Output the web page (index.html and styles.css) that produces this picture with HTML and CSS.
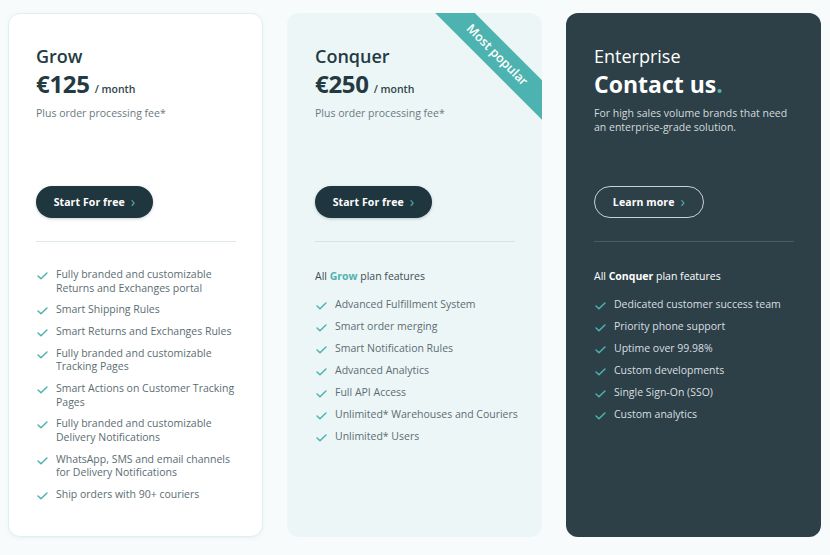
FILE: index.html
```html
<!DOCTYPE html>
<html>
<head>
<meta charset="utf-8">
<link rel="stylesheet" href="styles.css">
</head>
<body>
<div class="plans">
  <div class="card card-grow">
    <div class="top">
      <div class="name">Grow</div>
      <div class="price"><span class="amount">€125</span><span class="per">/ month</span></div>
      <p class="desc">Plus order processing fee*</p>
    </div>
    <a class="btn btn-dark">Start For free <span class="chev">›</span></a>
    <hr class="divider">
    <ul class="features first">
      <li><svg class="check" viewBox="0 0 12 9"><path d="M1 4.5 L4.3 7.6 L11 1.2"/></svg><span>Fully branded and customizable Returns and Exchanges portal</span></li>
      <li><svg class="check" viewBox="0 0 12 9"><path d="M1 4.5 L4.3 7.6 L11 1.2"/></svg><span>Smart Shipping Rules</span></li>
      <li><svg class="check" viewBox="0 0 12 9"><path d="M1 4.5 L4.3 7.6 L11 1.2"/></svg><span>Smart Returns and Exchanges Rules</span></li>
      <li><svg class="check" viewBox="0 0 12 9"><path d="M1 4.5 L4.3 7.6 L11 1.2"/></svg><span>Fully branded and customizable Tracking Pages</span></li>
      <li><svg class="check" viewBox="0 0 12 9"><path d="M1 4.5 L4.3 7.6 L11 1.2"/></svg><span>Smart Actions on Customer Tracking Pages</span></li>
      <li><svg class="check" viewBox="0 0 12 9"><path d="M1 4.5 L4.3 7.6 L11 1.2"/></svg><span>Fully branded and customizable Delivery Notifications</span></li>
      <li><svg class="check" viewBox="0 0 12 9"><path d="M1 4.5 L4.3 7.6 L11 1.2"/></svg><span>WhatsApp, SMS and email channels for Delivery Notifications</span></li>
      <li><svg class="check" viewBox="0 0 12 9"><path d="M1 4.5 L4.3 7.6 L11 1.2"/></svg><span>Ship orders with 90+ couriers</span></li>
    </ul>
  </div>

  <div class="card card-conquer">
    <div class="ribbon">Most popular</div>
    <div class="top">
      <div class="name">Conquer</div>
      <div class="price"><span class="amount">€250</span><span class="per">/ month</span></div>
      <p class="desc">Plus order processing fee*</p>
    </div>
    <a class="btn btn-dark">Start For free <span class="chev">›</span></a>
    <hr class="divider">
    <p class="all">All <b class="accent">Grow</b> plan features</p>
    <ul class="features">
      <li><svg class="check" viewBox="0 0 12 9"><path d="M1 4.5 L4.3 7.6 L11 1.2"/></svg><span>Advanced Fulfillment System</span></li>
      <li><svg class="check" viewBox="0 0 12 9"><path d="M1 4.5 L4.3 7.6 L11 1.2"/></svg><span>Smart order merging</span></li>
      <li><svg class="check" viewBox="0 0 12 9"><path d="M1 4.5 L4.3 7.6 L11 1.2"/></svg><span>Smart Notification Rules</span></li>
      <li><svg class="check" viewBox="0 0 12 9"><path d="M1 4.5 L4.3 7.6 L11 1.2"/></svg><span>Advanced Analytics</span></li>
      <li><svg class="check" viewBox="0 0 12 9"><path d="M1 4.5 L4.3 7.6 L11 1.2"/></svg><span>Full API Access</span></li>
      <li><svg class="check" viewBox="0 0 12 9"><path d="M1 4.5 L4.3 7.6 L11 1.2"/></svg><span>Unlimited* Warehouses and Couriers</span></li>
      <li><svg class="check" viewBox="0 0 12 9"><path d="M1 4.5 L4.3 7.6 L11 1.2"/></svg><span>Unlimited* Users</span></li>
    </ul>
  </div>

  <div class="card card-enterprise">
    <div class="top">
      <div class="name light">Enterprise</div>
      <div class="contact">Contact us<span class="dot">.</span></div>
      <p class="desc">For high sales volume brands that need an enterprise-grade solution.</p>
    </div>
    <a class="btn btn-outline">Learn more <span class="chev">›</span></a>
    <hr class="divider">
    <p class="all">All <b>Conquer</b> plan features</p>
    <ul class="features">
      <li><svg class="check" viewBox="0 0 12 9"><path d="M1 4.5 L4.3 7.6 L11 1.2"/></svg><span>Dedicated customer success team</span></li>
      <li><svg class="check" viewBox="0 0 12 9"><path d="M1 4.5 L4.3 7.6 L11 1.2"/></svg><span>Priority phone support</span></li>
      <li><svg class="check" viewBox="0 0 12 9"><path d="M1 4.5 L4.3 7.6 L11 1.2"/></svg><span>Uptime over 99.98%</span></li>
      <li><svg class="check" viewBox="0 0 12 9"><path d="M1 4.5 L4.3 7.6 L11 1.2"/></svg><span>Custom developments</span></li>
      <li><svg class="check" viewBox="0 0 12 9"><path d="M1 4.5 L4.3 7.6 L11 1.2"/></svg><span>Single Sign-On (SSO)</span></li>
      <li><svg class="check" viewBox="0 0 12 9"><path d="M1 4.5 L4.3 7.6 L11 1.2"/></svg><span>Custom analytics</span></li>
    </ul>
  </div>
</div>
</body>
</html>
```

FILE: styles.css
```css
* { box-sizing: border-box; }
html, body { margin: 0; padding: 0; }
body {
  background: #f8fbfb;
  font-family: "Open Sans", "DejaVu Sans", sans-serif;
  color: #243a42;
  width: 830px;
  height: 555px;
  overflow: hidden;
}
.plans {
  display: grid;
  grid-template-columns: 255px 255px 255px;
  column-gap: 24px;
  padding: 13px 0 0 8px;
}
.card {
  position: relative;
  overflow: hidden;
  height: 524px;
  border-radius: 12px;
  padding: 32px 27px 0 28px;
  display: flex;
  flex-direction: column;
  align-items: flex-start;
}
.card-grow {
  background: #ffffff;
  border: 1px solid #e2eff1;
  box-shadow: 0 1px 4px rgba(120, 170, 175, 0.12);
  padding: 31px 26px 0 27px;
}
.card-conquer { background: #edf6f7; }
.card-enterprise { background: #2d3f47; color: #ffffff; }

.top { height: 141px; width: 100%; }
.name {
  font-size: 18px;
  line-height: 22px;
  font-weight: 600;
  color: #243a42;
  margin-bottom: 2px;
}
.name.light { font-weight: 400; color: #ffffff; }
.price { display: flex; align-items: baseline; height: 30px; line-height: 30px; }
.amount { font-size: 24px; font-weight: 700; letter-spacing: -0.3px; color: #243a42; }
.per { font-size: 10.5px; font-weight: 600; margin-left: 5px; color: #2f444b; }
.contact { font-size: 23px; line-height: 30px; font-weight: 700; color: #ffffff; }
.dot { color: #4db3b0; }
.desc {
  margin: 8px 0 0;
  font-size: 10.5px;
  line-height: 13.5px;
  color: #6a7a7f;
}
.card-enterprise .desc { color: #d3dbdd; width: 200px; }

.btn {
  display: inline-flex;
  align-items: center;
  justify-content: center;
  height: 32px;
  border-radius: 16px;
  font-size: 10.5px;
  font-weight: 700;
  letter-spacing: 0.1px;
  color: #ffffff;
  text-decoration: none;
}
.btn-dark {
  width: 117px;
  background: #1f363e;
  box-shadow: 0 1px 3px rgba(31, 54, 62, 0.25);
}
.btn-outline {
  width: 110px;
  border: 1px solid #c9d2d4;
}
.chev { color: #4db3b0; font-size: 15px; font-weight: 400; margin-left: 6px; line-height: 1; position: relative; top: -1px; }

.divider {
  width: 200px;
  border: none;
  border-top: 1px solid #e0e9eb;
  margin: 23px 0 0;
  height: 0;
}
.card-conquer .divider { border-top-color: #d8e4e6; }
.card-enterprise .divider { border-top-color: #4a5b62; }

.all {
  margin: 27px 0 0;
  font-size: 10.5px;
  line-height: 14px;
  color: #3a4d53;
}
.all b { font-weight: 700; }
.accent { color: #4db3b0; }
.card-enterprise .all { color: #ffffff; }

.features {
  list-style: none;
  margin: 15px 0 0;
  padding: 0;
  width: 205px;
  display: flex;
  flex-direction: column;
  gap: 8.5px;
}
.features.first { margin-top: 26px; gap: 8.3px; }
.features li {
  display: flex;
  align-items: flex-start;
  font-size: 10.5px;
  line-height: 13.5px;
  color: #5b6d72;
}
.card-enterprise .features li { color: #d8dfe1; }
.check {
  flex: none;
  width: 11px;
  height: 8px;
  margin: 4px 8px 0 1px;
  fill: none;
  stroke: #4db3b0;
  stroke-width: 1.7;
  stroke-linecap: round;
  stroke-linejoin: round;
}

.ribbon {
  position: absolute;
  left: 110px;
  top: 28px;
  width: 200px;
  height: 28px;
  line-height: 28px;
  background: #4db3b0;
  color: #ffffff;
  font-size: 12.5px;
  font-weight: 600;
  text-align: center;
  transform: rotate(45deg);
}
```
